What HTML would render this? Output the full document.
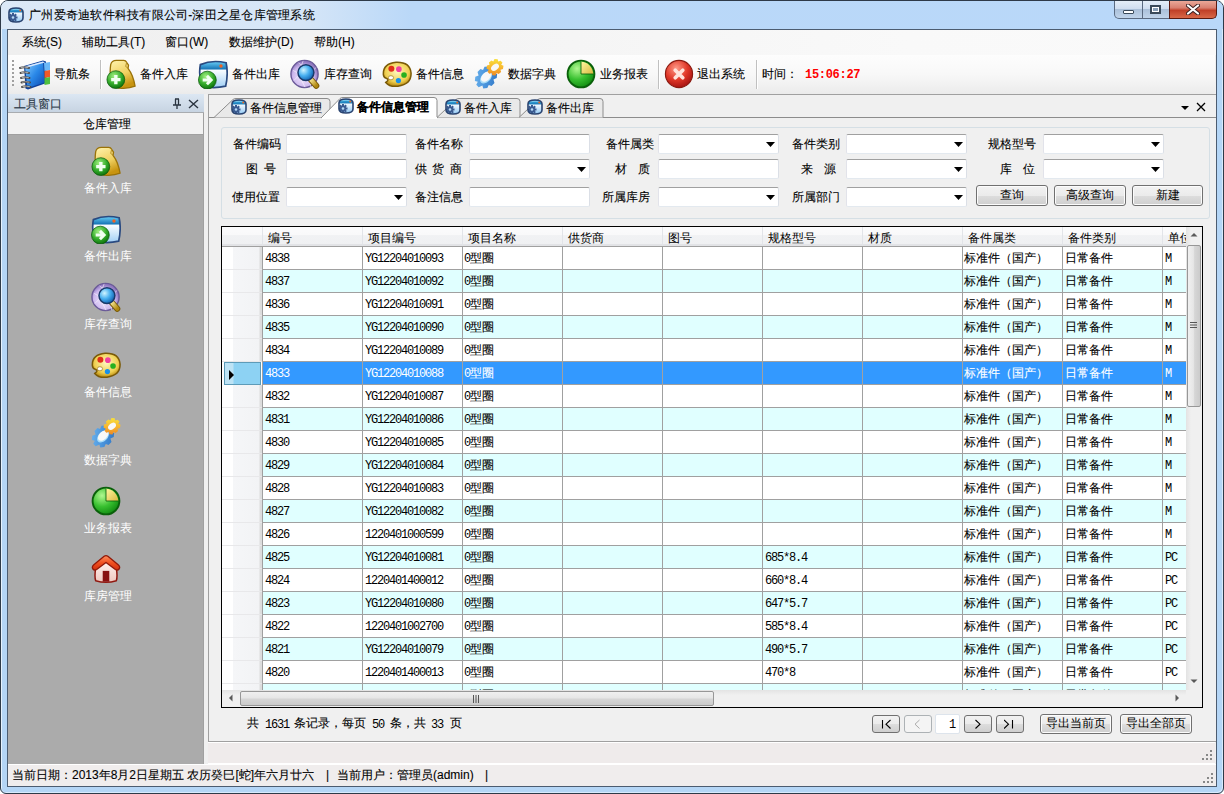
<!DOCTYPE html><html><head><meta charset="utf-8"><style>
*{margin:0;padding:0;box-sizing:border-box}
html,body{width:1224px;height:794px;overflow:hidden;background:#ffffff;font-family:'Liberation Sans', sans-serif;font-size:12px}
.a{position:absolute}
.t{position:absolute;white-space:pre;line-height:14px;-webkit-text-stroke:0.1px}
.m{-webkit-text-stroke:0}
</style></head><body>
<div class="a" style="left:0;top:0;width:1224px;height:794px;border:1px solid #2e3a48;border-radius:8px 8px 6px 6px;background:#b5d6f6;box-shadow:inset 1px 1px 0 #e6f2fd,inset -1px -1px 0 #d8eafc"></div>
<div class="a" style="left:1px;top:1px;width:1222px;height:28px;border-radius:7px 7px 0 0;background:linear-gradient(90deg,#dce9f7 0px,#d6e6f7 300px,#bad8f8 410px,#b9d8f9 100%)"></div>
<div class="a" style="left:2px;top:29px;width:5px;height:757px;background:#b4d5f5"></div>
<svg style="position:absolute;left:8px;top:7px" width="16" height="16" viewBox="0 0 32 32">
<defs><linearGradient id="gtb" x1="0" y1="0" x2="0" y2="1"><stop offset="0" stop-color="#40b8e8"/><stop offset="0.3" stop-color="#1a7ab8"/><stop offset="0.34" stop-color="#f4faff"/><stop offset="1" stop-color="#90c8f4"/></linearGradient>
<clipPath id="ctb"><path d="M2 10 Q2 2 16 2 Q30 2 30 10 L30 22 Q30 30 16 30 Q2 30 2 22 Z"/></clipPath></defs>
<path d="M2 10 Q2 2 16 2 Q30 2 30 10 L30 22 Q30 30 16 30 Q2 30 2 22 Z" fill="url(#gtb)"/>
<g clip-path="url(#ctb)"><g transform="translate(10 21)" fill="#3a5a90"><circle r="6"/><rect x="-2" y="-9" width="4" height="18"/><rect x="-9" y="-2" width="18" height="4"/><rect x="-2" y="-9" width="4" height="18" transform="rotate(45)"/><rect x="-2" y="-9" width="4" height="18" transform="rotate(-45)"/><circle r="2.6" fill="#b8dcf8"/></g></g>
<path d="M6 5.5 Q16 4 26 5.5" stroke="#c8f0ff" stroke-width="1.2" fill="none" opacity="0.8"/>
<circle cx="24.5" cy="7" r="2" fill="#f06820"/>
<path d="M2 10 Q2 2 16 2 Q30 2 30 10 L30 22 Q30 30 16 30 Q2 30 2 22 Z" fill="none" stroke="#2a4470" stroke-width="3.2"/>
</svg>
<div class="t" style="left:29px;top:8px;font-size:12px;color:#000;font-family:'Liberation Sans', sans-serif;font-weight:normal;letter-spacing:0.25px">广州爱奇迪软件科技有限公司-深田之星仓库管理系统</div>
<div class="a" style="left:1114px;top:1px;width:56px;height:18px;border:1px solid #5a6a80;border-top:none;border-radius:0 0 0 5px;background:linear-gradient(#e4eef8 0,#d0def0 45%,#a9bfd8 46%,#c0d4ea 100%)"></div>
<div class="a" style="left:1142px;top:1px;width:1px;height:18px;background:#5a6a80"></div>
<div class="a" style="left:1169px;top:1px;width:48px;height:18px;border:1px solid #5a1a10;border-top:none;border-radius:0 0 5px 0;background:linear-gradient(#eaa898 0,#d88070 40%,#c04028 55%,#d86848 100%)"></div>
<div class="a" style="left:1123px;top:10px;width:11px;height:4px;background:#fff;border:1px solid #3a4a5a;border-radius:1px"></div>
<div class="a" style="left:1150px;top:5px;width:11px;height:9px;border:2px solid #3a4a5a;background:#fff;box-shadow:inset 0 0 0 1px #fff"></div>
<div class="a" style="left:1153px;top:8px;width:5px;height:3px;background:#8aa0b8"></div>
<svg class="a" style="left:1186px;top:4px" width="14" height="11" viewBox="0 0 14 11"><path d="M2 1.5 L12 9.5 M12 1.5 L2 9.5" stroke="#3a2020" stroke-width="4" stroke-linecap="round"/><path d="M2 1.5 L12 9.5 M12 1.5 L2 9.5" stroke="#fff" stroke-width="2.2" stroke-linecap="round"/></svg>
<div class="a" style="left:7px;top:29px;width:1210px;height:758px;border:1px solid #4c5c70;background:#f0f0f0"></div>
<div class="a" style="left:8px;top:30px;width:1208px;height:25px;background:linear-gradient(90deg,#efefef 0,#f3f3f3 400px,#f9f9f9 900px,#fafafa 100%)"></div>
<div class="t" style="left:22px;top:35px;font-size:12px;color:#000;font-family:'Liberation Sans', sans-serif;font-weight:normal;">系统(S)</div>
<div class="t" style="left:82px;top:35px;font-size:12px;color:#000;font-family:'Liberation Sans', sans-serif;font-weight:normal;">辅助工具(T)</div>
<div class="t" style="left:165px;top:35px;font-size:12px;color:#000;font-family:'Liberation Sans', sans-serif;font-weight:normal;">窗口(W)</div>
<div class="t" style="left:229px;top:35px;font-size:12px;color:#000;font-family:'Liberation Sans', sans-serif;font-weight:normal;">数据维护(D)</div>
<div class="t" style="left:314px;top:35px;font-size:12px;color:#000;font-family:'Liberation Sans', sans-serif;font-weight:normal;">帮助(H)</div>
<div class="a" style="left:8px;top:55px;width:1207px;height:39px;border-radius:0 0 3px 0;background:linear-gradient(#fdfdfd 0,#f8f8f8 50%,#ebebeb 100%)"></div>
<div class="a" style="left:12px;top:60px;width:2px;height:2px;background:#a0a0a0"></div>
<div class="a" style="left:12px;top:64px;width:2px;height:2px;background:#a0a0a0"></div>
<div class="a" style="left:12px;top:68px;width:2px;height:2px;background:#a0a0a0"></div>
<div class="a" style="left:12px;top:72px;width:2px;height:2px;background:#a0a0a0"></div>
<div class="a" style="left:12px;top:76px;width:2px;height:2px;background:#a0a0a0"></div>
<div class="a" style="left:12px;top:80px;width:2px;height:2px;background:#a0a0a0"></div>
<div class="a" style="left:12px;top:84px;width:2px;height:2px;background:#a0a0a0"></div>
<svg style="position:absolute;left:19px;top:58px" width="32" height="32" viewBox="0 0 32 32">
<defs><linearGradient id="gnav" x1="0" y1="0" x2="1" y2="1"><stop offset="0" stop-color="#8cd0ff"/><stop offset="0.5" stop-color="#2a88e8"/><stop offset="1" stop-color="#0a48b0"/></linearGradient></defs>
<path d="M5 8 L24 2.5 L27 3.5 L27.5 25 L9 31.5 L6.5 30.5 Z" fill="#10409a"/>
<path d="M6 8.5 L24 3.5 L25.5 24.5 L8.5 30 Z" fill="url(#gnav)"/>
<path d="M6 8.5 L24 3.5 L26 4.5 L8 9.5 Z" fill="#d8e8ff"/>
<path d="M25 5 L31 4 L31 12 L25.5 13 Z" fill="#6ab8f8"/>
<path d="M25.5 13 L31 12 L31 19 L25.5 20 Z" fill="#f05a28"/>
<path d="M25.5 20 L31 19 L31 26 L25.5 27 Z" fill="#50c040"/>
<g stroke="#4a4a4a" stroke-width="2" stroke-linecap="round"><path d="M1 10 Q5 8.5 10 10"/><path d="M1.5 15 Q5.5 13.5 10 15"/><path d="M2 20 Q6 18.5 10.5 20"/><path d="M2.5 24.5 Q6.5 23 11 24.5"/><path d="M3 29 Q7 27.5 11.5 29"/></g>
<g stroke="#c8c8c8" stroke-width="0.8" stroke-linecap="round"><path d="M2 9.6 Q5 8.6 9 9.6"/><path d="M2.5 14.6 Q5.5 13.6 9 14.6"/><path d="M3 19.6 Q6 18.6 9.5 19.6"/><path d="M3.5 24.1 Q6.5 23.1 10 24.1"/><path d="M4 28.6 Q7 27.6 10.5 28.6"/></g>
</svg>
<div class="t" style="left:54px;top:67px;font-size:12px;color:#000;font-family:'Liberation Sans', sans-serif;font-weight:normal;">导航条</div>
<div class="a" style="left:100px;top:60px;width:1px;height:29px;background:#c0c0c0;box-shadow:1px 0 0 #fff"></div>
<svg style="position:absolute;left:106px;top:59px" width="30" height="30" viewBox="0 0 32 32">
<defs><linearGradient id="gin" x1="0" y1="0" x2="0.4" y2="1"><stop offset="0" stop-color="#fff4b0"/><stop offset="0.6" stop-color="#f0d060"/><stop offset="1" stop-color="#c89410"/></linearGradient>
<radialGradient id="ggr" cx="0.4" cy="0.3" r="0.75"><stop offset="0" stop-color="#a0f080"/><stop offset="0.6" stop-color="#30a828"/><stop offset="1" stop-color="#0a6a0a"/></radialGradient></defs>
<path d="M5 6 Q6 1.5 11 1.5 L19 1.5 Q21 1.5 22 3.5 L24 6.5 L23.5 10 Q29 17 31 29 Q24 32 14 31 L6 29 Q3.5 16 5 6 Z" fill="url(#gin)" stroke="#9a7208" stroke-width="1.4"/>
<path d="M22 3.5 L21 8 L24 10" fill="none" stroke="#b08a20" stroke-width="1"/>
<circle cx="10.5" cy="22" r="9.5" fill="url(#ggr)" stroke="#0a5a0a" stroke-width="0.8"/>
<path d="M5.5 22 H15.5 M10.5 17 V27" stroke="#f0fff0" stroke-width="3.6"/>
</svg>
<div class="t" style="left:140px;top:67px;font-size:12px;color:#000;font-family:'Liberation Sans', sans-serif;font-weight:normal;">备件入库</div>
<svg style="position:absolute;left:198px;top:59px" width="30" height="30" viewBox="0 0 32 32">
<defs><linearGradient id="gout" x1="0" y1="0" x2="0" y2="1"><stop offset="0" stop-color="#6ad0f8"/><stop offset="0.28" stop-color="#1a78b8"/><stop offset="0.34" stop-color="#f8fcff"/><stop offset="1" stop-color="#a0cff5"/></linearGradient>
<radialGradient id="ggr2" cx="0.4" cy="0.3" r="0.75"><stop offset="0" stop-color="#a0f080"/><stop offset="0.6" stop-color="#30a828"/><stop offset="1" stop-color="#0a6a0a"/></radialGradient></defs>
<path d="M2.5 6 Q15 0.5 30 4 Q32.5 16 29.5 29 Q17 32 4 29 Q0.5 17 2.5 6 Z" fill="url(#gout)" stroke="#2a4a80" stroke-width="1.8"/>
<circle cx="24.5" cy="7.5" r="1.8" fill="#f06020"/>
<circle cx="10" cy="22.5" r="9.5" fill="url(#ggr2)" stroke="#0a5a0a" stroke-width="0.8"/>
<path d="M5 22.5 H12.5 M9.5 18 L14 22.5 L9.5 27" stroke="#f0fff0" stroke-width="3.2" fill="none" stroke-linejoin="miter"/>
</svg>
<div class="t" style="left:232px;top:67px;font-size:12px;color:#000;font-family:'Liberation Sans', sans-serif;font-weight:normal;">备件出库</div>
<svg style="position:absolute;left:290px;top:59px" width="30" height="30" viewBox="0 0 32 32">
<defs><radialGradient id="gq" cx="0.45" cy="0.6" r="0.55"><stop offset="0" stop-color="#f4ecff"/><stop offset="0.7" stop-color="#cdb8ee"/><stop offset="1" stop-color="#9078c0"/></radialGradient>
<radialGradient id="gqm" cx="0.35" cy="0.35" r="0.7"><stop offset="0" stop-color="#d0f4ff"/><stop offset="0.5" stop-color="#48b0f0"/><stop offset="1" stop-color="#1060b0"/></radialGradient>
<linearGradient id="gqh" x1="0" y1="0" x2="1" y2="1"><stop offset="0" stop-color="#fff0a0"/><stop offset="1" stop-color="#b08810"/></linearGradient></defs>
<circle cx="15.5" cy="16" r="14.5" fill="url(#gq)" stroke="#6a5a98" stroke-width="1.5"/>
<path d="M3 12 Q16 22 28 9 M4 23 Q15 8 27 24 M14 2 Q7 16 16 30 M9 4 Q22 12 22 30" stroke="#ffffff" stroke-opacity="0.7" stroke-width="0.8" fill="none"/>
<path d="M21.5 21 L28 28.5" stroke="#7a5a08" stroke-width="6.5" stroke-linecap="round"/>
<path d="M21.5 21 L28 28.5" stroke="url(#gqh)" stroke-width="4.5" stroke-linecap="round"/>
<circle cx="17" cy="14.5" r="8.5" fill="url(#gqm)" stroke="#1a3a6a" stroke-width="1.6"/>
</svg>
<div class="t" style="left:324px;top:67px;font-size:12px;color:#000;font-family:'Liberation Sans', sans-serif;font-weight:normal;">库存查询</div>
<svg style="position:absolute;left:382px;top:59px" width="30" height="30" viewBox="0 0 32 32">
<defs><radialGradient id="gp" cx="0.5" cy="0.4" r="0.6"><stop offset="0" stop-color="#fff8c0"/><stop offset="0.7" stop-color="#f0d050"/><stop offset="1" stop-color="#b88a10"/></radialGradient></defs>
<path d="M1.5 17 Q0.5 5 15 3.5 Q30 3 31 15 Q31.5 27 17 29 Q8 30 4 25 Q8.5 22 4.5 20.5 Q2 20 1.5 17 Z" fill="url(#gp)" stroke="#7a5a08" stroke-width="1.6"/>
<ellipse cx="9.5" cy="20" rx="2.8" ry="2.2" fill="#ffffff" stroke="#a08030" stroke-width="0.8"/>
<circle cx="10" cy="10.5" r="3.2" fill="#e03018"/><circle cx="18" cy="10.8" r="3" fill="#f040a0"/>
<circle cx="23.5" cy="17" r="3" fill="#28b020"/><circle cx="17.5" cy="23" r="2.8" fill="#1890e8"/>
</svg>
<div class="t" style="left:416px;top:67px;font-size:12px;color:#000;font-family:'Liberation Sans', sans-serif;font-weight:normal;">备件信息</div>
<svg style="position:absolute;left:474px;top:59px" width="30" height="30" viewBox="0 0 32 32">
<defs><linearGradient id="gd1" x1="0" y1="0" x2="1" y2="1"><stop offset="0" stop-color="#70b8f0"/><stop offset="0.5" stop-color="#4a94dc"/><stop offset="1" stop-color="#2a70c0"/></linearGradient>
<linearGradient id="gd2" x1="1" y1="0" x2="0" y2="1"><stop offset="0" stop-color="#f8f040"/><stop offset="0.5" stop-color="#f8b830"/><stop offset="1" stop-color="#e87820"/></linearGradient></defs>
<g transform="translate(12.8 19.7) rotate(-45) scale(1.12 0.92)"><path d="M-2 -11.5 L2 -11.5 L3 -8.5 L6.2 -10 L9.2 -6.8 L7.8 -3.6 L11.5 -2 L11.5 2 L8.4 3.2 L9.8 6.3 L6.8 9.3 L3.6 7.8 L2 11.5 L-2 11.5 L-3.2 8.4 L-6.3 9.8 L-9.3 6.8 L-7.8 3.6 L-11.5 2 L-11.5 -2 L-8.4 -3.2 L-9.8 -6.3 L-6.8 -9.3 L-3.6 -7.8 Z" fill="url(#gd1)"/>
<ellipse cx="0" cy="0" rx="6.8" ry="5.2" fill="#a8dcf8"/><ellipse cx="0.8" cy="-0.6" rx="6" ry="4.6" fill="#f8f8f8"/></g>
<g transform="translate(22.4 8.8) rotate(-40) scale(1.08 0.95)"><path d="M-1.6 -8.5 L1.6 -8.5 L2.4 -6.2 L4.8 -7.4 L7.2 -5 L6 -2.6 L8.5 -1.6 L8.5 1.6 L6.2 2.4 L7.4 4.8 L5 7.2 L2.6 6 L1.6 8.5 L-1.6 8.5 L-2.4 6.2 L-4.8 7.4 L-7.2 5 L-6 2.6 L-8.5 1.6 L-8.5 -1.6 L-6.2 -2.4 L-7.4 -4.8 L-5 -7.2 L-2.6 -6 Z" fill="url(#gd2)"/>
<ellipse cx="0" cy="0" rx="4.4" ry="3.3" fill="#f8f8f8"/></g>
</svg>
<div class="t" style="left:508px;top:67px;font-size:12px;color:#000;font-family:'Liberation Sans', sans-serif;font-weight:normal;">数据字典</div>
<svg style="position:absolute;left:566px;top:59px" width="30" height="30" viewBox="0 0 32 32">
<defs><radialGradient id="gr" cx="0.35" cy="0.3" r="0.75"><stop offset="0" stop-color="#b0f890"/><stop offset="0.55" stop-color="#38c030"/><stop offset="1" stop-color="#108a10"/></radialGradient>
<linearGradient id="gry" x1="0" y1="0" x2="1" y2="1"><stop offset="0" stop-color="#fff8a0"/><stop offset="1" stop-color="#d8b840"/></linearGradient></defs>
<circle cx="16" cy="16" r="14.3" fill="url(#gr)" stroke="#0a600a" stroke-width="2"/>
<path d="M16 16 L16 3 A13 13 0 0 1 29 16 Z" fill="url(#gry)"/>
<path d="M16 3 V16 H29" stroke="#0a600a" stroke-width="0.9" fill="none"/>
</svg>
<div class="t" style="left:600px;top:67px;font-size:12px;color:#000;font-family:'Liberation Sans', sans-serif;font-weight:normal;">业务报表</div>
<div class="a" style="left:658px;top:60px;width:1px;height:29px;background:#c0c0c0;box-shadow:1px 0 0 #fff"></div>
<svg style="position:absolute;left:664px;top:59px" width="30" height="30" viewBox="0 0 32 32">
<defs><radialGradient id="ge" cx="0.4" cy="0.3" r="0.75"><stop offset="0" stop-color="#ff9a88"/><stop offset="0.55" stop-color="#e03828"/><stop offset="1" stop-color="#a01010"/></radialGradient></defs>
<circle cx="16" cy="16" r="14.5" fill="url(#ge)" stroke="#8a1a10" stroke-width="1.2"/>
<path d="M12 12 L20 20 M20 12 L12 20" stroke="#ffe4dc" stroke-width="4" stroke-linecap="round"/>
</svg>
<div class="t" style="left:697px;top:67px;font-size:12px;color:#000;font-family:'Liberation Sans', sans-serif;font-weight:normal;">退出系统</div>
<div class="a" style="left:756px;top:60px;width:1px;height:29px;background:#c0c0c0;box-shadow:1px 0 0 #fff"></div>
<div class="t" style="left:762px;top:67px;font-size:12px;color:#000;font-family:'Liberation Sans', sans-serif;font-weight:normal;">时间：</div>
<div class="t" style="left:805px;top:68px;font-size:12px;color:#ff0000;font-family:'Liberation Mono', monospace;font-weight:bold;letter-spacing:-0.3px;-webkit-text-stroke:0">15:06:27</div>
<div class="a" style="left:8px;top:94px;width:196px;height:19px;background:linear-gradient(#dce7f3,#c7d4e2);border-bottom:1px solid #a8acb0"></div>
<div class="t" style="left:14px;top:97px;font-size:12px;color:#2c3a48;font-family:'Liberation Sans', sans-serif;font-weight:normal;">工具窗口</div>
<svg class="a" style="left:172px;top:98px" width="10" height="12" viewBox="0 0 10 12"><path d="M3 1 H7 M3.5 1 V7 M6.5 1 V7 M1 7 H9 M5 7 V11" stroke="#2a3440" stroke-width="1.3" fill="none"/></svg>
<svg class="a" style="left:188px;top:99px" width="11" height="10" viewBox="0 0 11 10"><path d="M1 1 L10 9 M10 1 L1 9" stroke="#2a3440" stroke-width="1.4"/></svg>
<div class="a" style="left:8px;top:113px;width:196px;height:22px;background:#f2f2f2;border-bottom:1px solid #a0a0a0;border-right:1px solid #a0a0a0"></div>
<div class="t" style="left:83px;top:117px;font-size:12px;color:#000;font-family:'Liberation Sans', sans-serif;font-weight:normal;">仓库管理</div>
<div class="a" style="left:8px;top:135px;width:196px;height:629px;background:#ababab;border-right:1px solid #a0a0a0"></div>
<svg style="position:absolute;left:91px;top:146px" width="30" height="30" viewBox="0 0 32 32">
<defs><linearGradient id="gin" x1="0" y1="0" x2="0.4" y2="1"><stop offset="0" stop-color="#fff4b0"/><stop offset="0.6" stop-color="#f0d060"/><stop offset="1" stop-color="#c89410"/></linearGradient>
<radialGradient id="ggr" cx="0.4" cy="0.3" r="0.75"><stop offset="0" stop-color="#a0f080"/><stop offset="0.6" stop-color="#30a828"/><stop offset="1" stop-color="#0a6a0a"/></radialGradient></defs>
<path d="M5 6 Q6 1.5 11 1.5 L19 1.5 Q21 1.5 22 3.5 L24 6.5 L23.5 10 Q29 17 31 29 Q24 32 14 31 L6 29 Q3.5 16 5 6 Z" fill="url(#gin)" stroke="#9a7208" stroke-width="1.4"/>
<path d="M22 3.5 L21 8 L24 10" fill="none" stroke="#b08a20" stroke-width="1"/>
<circle cx="10.5" cy="22" r="9.5" fill="url(#ggr)" stroke="#0a5a0a" stroke-width="0.8"/>
<path d="M5.5 22 H15.5 M10.5 17 V27" stroke="#f0fff0" stroke-width="3.6"/>
</svg>
<div class="t" style="left:84px;top:181px;font-size:12px;color:#ffffff;font-family:'Liberation Sans', sans-serif;font-weight:normal;-webkit-text-stroke:0">备件入库</div>
<svg style="position:absolute;left:91px;top:214px" width="30" height="30" viewBox="0 0 32 32">
<defs><linearGradient id="gout" x1="0" y1="0" x2="0" y2="1"><stop offset="0" stop-color="#6ad0f8"/><stop offset="0.28" stop-color="#1a78b8"/><stop offset="0.34" stop-color="#f8fcff"/><stop offset="1" stop-color="#a0cff5"/></linearGradient>
<radialGradient id="ggr2" cx="0.4" cy="0.3" r="0.75"><stop offset="0" stop-color="#a0f080"/><stop offset="0.6" stop-color="#30a828"/><stop offset="1" stop-color="#0a6a0a"/></radialGradient></defs>
<path d="M2.5 6 Q15 0.5 30 4 Q32.5 16 29.5 29 Q17 32 4 29 Q0.5 17 2.5 6 Z" fill="url(#gout)" stroke="#2a4a80" stroke-width="1.8"/>
<circle cx="24.5" cy="7.5" r="1.8" fill="#f06020"/>
<circle cx="10" cy="22.5" r="9.5" fill="url(#ggr2)" stroke="#0a5a0a" stroke-width="0.8"/>
<path d="M5 22.5 H12.5 M9.5 18 L14 22.5 L9.5 27" stroke="#f0fff0" stroke-width="3.2" fill="none" stroke-linejoin="miter"/>
</svg>
<div class="t" style="left:84px;top:249px;font-size:12px;color:#ffffff;font-family:'Liberation Sans', sans-serif;font-weight:normal;-webkit-text-stroke:0">备件出库</div>
<svg style="position:absolute;left:91px;top:282px" width="30" height="30" viewBox="0 0 32 32">
<defs><radialGradient id="gq" cx="0.45" cy="0.6" r="0.55"><stop offset="0" stop-color="#f4ecff"/><stop offset="0.7" stop-color="#cdb8ee"/><stop offset="1" stop-color="#9078c0"/></radialGradient>
<radialGradient id="gqm" cx="0.35" cy="0.35" r="0.7"><stop offset="0" stop-color="#d0f4ff"/><stop offset="0.5" stop-color="#48b0f0"/><stop offset="1" stop-color="#1060b0"/></radialGradient>
<linearGradient id="gqh" x1="0" y1="0" x2="1" y2="1"><stop offset="0" stop-color="#fff0a0"/><stop offset="1" stop-color="#b08810"/></linearGradient></defs>
<circle cx="15.5" cy="16" r="14.5" fill="url(#gq)" stroke="#6a5a98" stroke-width="1.5"/>
<path d="M3 12 Q16 22 28 9 M4 23 Q15 8 27 24 M14 2 Q7 16 16 30 M9 4 Q22 12 22 30" stroke="#ffffff" stroke-opacity="0.7" stroke-width="0.8" fill="none"/>
<path d="M21.5 21 L28 28.5" stroke="#7a5a08" stroke-width="6.5" stroke-linecap="round"/>
<path d="M21.5 21 L28 28.5" stroke="url(#gqh)" stroke-width="4.5" stroke-linecap="round"/>
<circle cx="17" cy="14.5" r="8.5" fill="url(#gqm)" stroke="#1a3a6a" stroke-width="1.6"/>
</svg>
<div class="t" style="left:84px;top:317px;font-size:12px;color:#ffffff;font-family:'Liberation Sans', sans-serif;font-weight:normal;-webkit-text-stroke:0">库存查询</div>
<svg style="position:absolute;left:91px;top:350px" width="30" height="30" viewBox="0 0 32 32">
<defs><radialGradient id="gp" cx="0.5" cy="0.4" r="0.6"><stop offset="0" stop-color="#fff8c0"/><stop offset="0.7" stop-color="#f0d050"/><stop offset="1" stop-color="#b88a10"/></radialGradient></defs>
<path d="M1.5 17 Q0.5 5 15 3.5 Q30 3 31 15 Q31.5 27 17 29 Q8 30 4 25 Q8.5 22 4.5 20.5 Q2 20 1.5 17 Z" fill="url(#gp)" stroke="#7a5a08" stroke-width="1.6"/>
<ellipse cx="9.5" cy="20" rx="2.8" ry="2.2" fill="#ffffff" stroke="#a08030" stroke-width="0.8"/>
<circle cx="10" cy="10.5" r="3.2" fill="#e03018"/><circle cx="18" cy="10.8" r="3" fill="#f040a0"/>
<circle cx="23.5" cy="17" r="3" fill="#28b020"/><circle cx="17.5" cy="23" r="2.8" fill="#1890e8"/>
</svg>
<div class="t" style="left:84px;top:385px;font-size:12px;color:#ffffff;font-family:'Liberation Sans', sans-serif;font-weight:normal;-webkit-text-stroke:0">备件信息</div>
<svg style="position:absolute;left:91px;top:418px" width="30" height="30" viewBox="0 0 32 32">
<defs><linearGradient id="gd1" x1="0" y1="0" x2="1" y2="1"><stop offset="0" stop-color="#70b8f0"/><stop offset="0.5" stop-color="#4a94dc"/><stop offset="1" stop-color="#2a70c0"/></linearGradient>
<linearGradient id="gd2" x1="1" y1="0" x2="0" y2="1"><stop offset="0" stop-color="#f8f040"/><stop offset="0.5" stop-color="#f8b830"/><stop offset="1" stop-color="#e87820"/></linearGradient></defs>
<g transform="translate(12.8 19.7) rotate(-45) scale(1.12 0.92)"><path d="M-2 -11.5 L2 -11.5 L3 -8.5 L6.2 -10 L9.2 -6.8 L7.8 -3.6 L11.5 -2 L11.5 2 L8.4 3.2 L9.8 6.3 L6.8 9.3 L3.6 7.8 L2 11.5 L-2 11.5 L-3.2 8.4 L-6.3 9.8 L-9.3 6.8 L-7.8 3.6 L-11.5 2 L-11.5 -2 L-8.4 -3.2 L-9.8 -6.3 L-6.8 -9.3 L-3.6 -7.8 Z" fill="url(#gd1)"/>
<ellipse cx="0" cy="0" rx="6.8" ry="5.2" fill="#a8dcf8"/><ellipse cx="0.8" cy="-0.6" rx="6" ry="4.6" fill="#f8f8f8"/></g>
<g transform="translate(22.4 8.8) rotate(-40) scale(1.08 0.95)"><path d="M-1.6 -8.5 L1.6 -8.5 L2.4 -6.2 L4.8 -7.4 L7.2 -5 L6 -2.6 L8.5 -1.6 L8.5 1.6 L6.2 2.4 L7.4 4.8 L5 7.2 L2.6 6 L1.6 8.5 L-1.6 8.5 L-2.4 6.2 L-4.8 7.4 L-7.2 5 L-6 2.6 L-8.5 1.6 L-8.5 -1.6 L-6.2 -2.4 L-7.4 -4.8 L-5 -7.2 L-2.6 -6 Z" fill="url(#gd2)"/>
<ellipse cx="0" cy="0" rx="4.4" ry="3.3" fill="#f8f8f8"/></g>
</svg>
<div class="t" style="left:84px;top:453px;font-size:12px;color:#ffffff;font-family:'Liberation Sans', sans-serif;font-weight:normal;-webkit-text-stroke:0">数据字典</div>
<svg style="position:absolute;left:91px;top:486px" width="30" height="30" viewBox="0 0 32 32">
<defs><radialGradient id="gr" cx="0.35" cy="0.3" r="0.75"><stop offset="0" stop-color="#b0f890"/><stop offset="0.55" stop-color="#38c030"/><stop offset="1" stop-color="#108a10"/></radialGradient>
<linearGradient id="gry" x1="0" y1="0" x2="1" y2="1"><stop offset="0" stop-color="#fff8a0"/><stop offset="1" stop-color="#d8b840"/></linearGradient></defs>
<circle cx="16" cy="16" r="14.3" fill="url(#gr)" stroke="#0a600a" stroke-width="2"/>
<path d="M16 16 L16 3 A13 13 0 0 1 29 16 Z" fill="url(#gry)"/>
<path d="M16 3 V16 H29" stroke="#0a600a" stroke-width="0.9" fill="none"/>
</svg>
<div class="t" style="left:84px;top:521px;font-size:12px;color:#ffffff;font-family:'Liberation Sans', sans-serif;font-weight:normal;-webkit-text-stroke:0">业务报表</div>
<svg style="position:absolute;left:91px;top:554px" width="30" height="30" viewBox="0 0 32 32">
<defs><linearGradient id="gh" x1="0" y1="0" x2="0" y2="1"><stop offset="0" stop-color="#ff9060"/><stop offset="0.5" stop-color="#f05020"/><stop offset="1" stop-color="#d03010"/></linearGradient>
<linearGradient id="gh2" x1="0" y1="0" x2="0" y2="1"><stop offset="0" stop-color="#fff4f0"/><stop offset="1" stop-color="#f0c8c0"/></linearGradient></defs>
<path d="M5 15 L16 7 L27 15 Q28.5 24 27 28.5 Q16 32 5 28.5 Q3.5 24 5 15 Z" fill="url(#gh2)" stroke="#901810" stroke-width="1.6"/>
<rect x="12.5" y="18" width="7" height="11.5" fill="#881010"/>
<path d="M2 16 Q0.5 13.5 3 11.5 L14 2.5 Q16 1 18 2.5 L29 11.5 Q31.5 13.5 30 16 Q28.5 18 26 16.5 L16 9 L6 16.5 Q3.5 18 2 16 Z" fill="url(#gh)" stroke="#901808" stroke-width="1.4" stroke-linejoin="round"/>
</svg>
<div class="t" style="left:84px;top:589px;font-size:12px;color:#ffffff;font-family:'Liberation Sans', sans-serif;font-weight:normal;-webkit-text-stroke:0">库房管理</div>
<div class="a" style="left:208px;top:94px;width:1008px;height:648px;border-left:1px solid #a0a0a0;border-top:1px solid #a0a0a0;border-bottom:1px solid #a0a0a0;background:#f0f0f0"></div>
<svg class="a" style="left:208px;top:94px" width="1008" height="25" viewBox="0 0 1008 25"><line x1="1" y1="23.5" x2="1008" y2="23.5" stroke="#8c8c8c"/><path d="M6 23.5 L25 5.5 Q26 4.5 28 4.5 L119 4.5 Q122 4.5 122 7.5 L122 23.5" fill="#e9e9e9" stroke="#8c8c8c"/><path d="M229 23.5 L248 5.5 Q249 4.5 251 4.5 L309 4.5 Q312 4.5 312 7.5 L312 23.5" fill="#e9e9e9" stroke="#8c8c8c"/><path d="M311 23.5 L330 5.5 Q331 4.5 333 4.5 L392 4.5 Q395 4.5 395 7.5 L395 23.5" fill="#e9e9e9" stroke="#8c8c8c"/><path d="M113 24 L132 4.5 Q133 3.5 135 3.5 L226 3.5 Q229 3.5 229 6.5 L229 24" fill="#ffffff" stroke="#8c8c8c"/><rect x="114" y="23" width="115" height="2" fill="#ffffff"/></svg>
<svg style="position:absolute;left:231px;top:99px" width="16" height="16" viewBox="0 0 32 32">
<defs><linearGradient id="gtb" x1="0" y1="0" x2="0" y2="1"><stop offset="0" stop-color="#40b8e8"/><stop offset="0.3" stop-color="#1a7ab8"/><stop offset="0.34" stop-color="#f4faff"/><stop offset="1" stop-color="#90c8f4"/></linearGradient>
<clipPath id="ctb"><path d="M2 10 Q2 2 16 2 Q30 2 30 10 L30 22 Q30 30 16 30 Q2 30 2 22 Z"/></clipPath></defs>
<path d="M2 10 Q2 2 16 2 Q30 2 30 10 L30 22 Q30 30 16 30 Q2 30 2 22 Z" fill="url(#gtb)"/>
<g clip-path="url(#ctb)"><g transform="translate(10 21)" fill="#3a5a90"><circle r="6"/><rect x="-2" y="-9" width="4" height="18"/><rect x="-9" y="-2" width="18" height="4"/><rect x="-2" y="-9" width="4" height="18" transform="rotate(45)"/><rect x="-2" y="-9" width="4" height="18" transform="rotate(-45)"/><circle r="2.6" fill="#b8dcf8"/></g></g>
<path d="M6 5.5 Q16 4 26 5.5" stroke="#c8f0ff" stroke-width="1.2" fill="none" opacity="0.8"/>
<circle cx="24.5" cy="7" r="2" fill="#f06820"/>
<path d="M2 10 Q2 2 16 2 Q30 2 30 10 L30 22 Q30 30 16 30 Q2 30 2 22 Z" fill="none" stroke="#2a4470" stroke-width="3.2"/>
</svg>
<div class="t" style="left:250px;top:101px;font-size:12px;color:#000;font-family:'Liberation Sans', sans-serif;font-weight:normal;">备件信息管理</div>
<svg style="position:absolute;left:338px;top:98px" width="16" height="16" viewBox="0 0 32 32">
<defs><linearGradient id="gtb" x1="0" y1="0" x2="0" y2="1"><stop offset="0" stop-color="#40b8e8"/><stop offset="0.3" stop-color="#1a7ab8"/><stop offset="0.34" stop-color="#f4faff"/><stop offset="1" stop-color="#90c8f4"/></linearGradient>
<clipPath id="ctb"><path d="M2 10 Q2 2 16 2 Q30 2 30 10 L30 22 Q30 30 16 30 Q2 30 2 22 Z"/></clipPath></defs>
<path d="M2 10 Q2 2 16 2 Q30 2 30 10 L30 22 Q30 30 16 30 Q2 30 2 22 Z" fill="url(#gtb)"/>
<g clip-path="url(#ctb)"><g transform="translate(10 21)" fill="#3a5a90"><circle r="6"/><rect x="-2" y="-9" width="4" height="18"/><rect x="-9" y="-2" width="18" height="4"/><rect x="-2" y="-9" width="4" height="18" transform="rotate(45)"/><rect x="-2" y="-9" width="4" height="18" transform="rotate(-45)"/><circle r="2.6" fill="#b8dcf8"/></g></g>
<path d="M6 5.5 Q16 4 26 5.5" stroke="#c8f0ff" stroke-width="1.2" fill="none" opacity="0.8"/>
<circle cx="24.5" cy="7" r="2" fill="#f06820"/>
<path d="M2 10 Q2 2 16 2 Q30 2 30 10 L30 22 Q30 30 16 30 Q2 30 2 22 Z" fill="none" stroke="#2a4470" stroke-width="3.2"/>
</svg>
<div class="t" style="left:357px;top:100px;font-size:12px;color:#000;font-family:'Liberation Sans', sans-serif;font-weight:bold;">备件信息管理</div>
<svg style="position:absolute;left:445px;top:99px" width="16" height="16" viewBox="0 0 32 32">
<defs><linearGradient id="gtb" x1="0" y1="0" x2="0" y2="1"><stop offset="0" stop-color="#40b8e8"/><stop offset="0.3" stop-color="#1a7ab8"/><stop offset="0.34" stop-color="#f4faff"/><stop offset="1" stop-color="#90c8f4"/></linearGradient>
<clipPath id="ctb"><path d="M2 10 Q2 2 16 2 Q30 2 30 10 L30 22 Q30 30 16 30 Q2 30 2 22 Z"/></clipPath></defs>
<path d="M2 10 Q2 2 16 2 Q30 2 30 10 L30 22 Q30 30 16 30 Q2 30 2 22 Z" fill="url(#gtb)"/>
<g clip-path="url(#ctb)"><g transform="translate(10 21)" fill="#3a5a90"><circle r="6"/><rect x="-2" y="-9" width="4" height="18"/><rect x="-9" y="-2" width="18" height="4"/><rect x="-2" y="-9" width="4" height="18" transform="rotate(45)"/><rect x="-2" y="-9" width="4" height="18" transform="rotate(-45)"/><circle r="2.6" fill="#b8dcf8"/></g></g>
<path d="M6 5.5 Q16 4 26 5.5" stroke="#c8f0ff" stroke-width="1.2" fill="none" opacity="0.8"/>
<circle cx="24.5" cy="7" r="2" fill="#f06820"/>
<path d="M2 10 Q2 2 16 2 Q30 2 30 10 L30 22 Q30 30 16 30 Q2 30 2 22 Z" fill="none" stroke="#2a4470" stroke-width="3.2"/>
</svg>
<div class="t" style="left:464px;top:101px;font-size:12px;color:#000;font-family:'Liberation Sans', sans-serif;font-weight:normal;">备件入库</div>
<svg style="position:absolute;left:527px;top:99px" width="16" height="16" viewBox="0 0 32 32">
<defs><linearGradient id="gtb" x1="0" y1="0" x2="0" y2="1"><stop offset="0" stop-color="#40b8e8"/><stop offset="0.3" stop-color="#1a7ab8"/><stop offset="0.34" stop-color="#f4faff"/><stop offset="1" stop-color="#90c8f4"/></linearGradient>
<clipPath id="ctb"><path d="M2 10 Q2 2 16 2 Q30 2 30 10 L30 22 Q30 30 16 30 Q2 30 2 22 Z"/></clipPath></defs>
<path d="M2 10 Q2 2 16 2 Q30 2 30 10 L30 22 Q30 30 16 30 Q2 30 2 22 Z" fill="url(#gtb)"/>
<g clip-path="url(#ctb)"><g transform="translate(10 21)" fill="#3a5a90"><circle r="6"/><rect x="-2" y="-9" width="4" height="18"/><rect x="-9" y="-2" width="18" height="4"/><rect x="-2" y="-9" width="4" height="18" transform="rotate(45)"/><rect x="-2" y="-9" width="4" height="18" transform="rotate(-45)"/><circle r="2.6" fill="#b8dcf8"/></g></g>
<path d="M6 5.5 Q16 4 26 5.5" stroke="#c8f0ff" stroke-width="1.2" fill="none" opacity="0.8"/>
<circle cx="24.5" cy="7" r="2" fill="#f06820"/>
<path d="M2 10 Q2 2 16 2 Q30 2 30 10 L30 22 Q30 30 16 30 Q2 30 2 22 Z" fill="none" stroke="#2a4470" stroke-width="3.2"/>
</svg>
<div class="t" style="left:546px;top:101px;font-size:12px;color:#000;font-family:'Liberation Sans', sans-serif;font-weight:normal;">备件出库</div>
<svg class="a" style="left:1180px;top:105px" width="10" height="6" viewBox="0 0 10 6"><path d="M1 1 L9 1 L5 5 Z" fill="#000"/></svg>
<svg class="a" style="left:1196px;top:102px" width="10" height="10" viewBox="0 0 10 10"><path d="M1 1 L9 9 M9 1 L1 9" stroke="#000" stroke-width="1.3"/></svg>
<div class="a" style="left:221px;top:127px;width:989px;height:92px;border:1px solid #d5dfe5;border-radius:3px;background:#f0f0f0"></div>
<div class="t" style="left:233px;top:137px;font-size:12px;color:#000;font-family:'Liberation Sans', sans-serif;font-weight:normal;">备件编码</div>
<div class="a" style="left:286px;top:134px;width:121px;height:20px;border:1px solid #abadb3;border-top-color:#a0a0a0;border-left-color:#e2e3ea;border-right-color:#dbdfe6;border-bottom-color:#e3e9ef;border-radius:2px;background:#fff"></div>
<div class="t" style="left:415px;top:137px;font-size:12px;color:#000;font-family:'Liberation Sans', sans-serif;font-weight:normal;">备件名称</div>
<div class="a" style="left:469px;top:134px;width:121px;height:20px;border:1px solid #abadb3;border-top-color:#a0a0a0;border-left-color:#e2e3ea;border-right-color:#dbdfe6;border-bottom-color:#e3e9ef;border-radius:2px;background:#fff"></div>
<div class="t" style="left:606px;top:137px;font-size:12px;color:#000;font-family:'Liberation Sans', sans-serif;font-weight:normal;">备件属类</div>
<div class="a" style="left:658px;top:134px;width:121px;height:20px;border:1px solid #abadb3;border-top-color:#a0a0a0;border-left-color:#e2e3ea;border-right-color:#dbdfe6;border-bottom-color:#e3e9ef;border-radius:2px;background:#fff"></div><svg class="a" style="left:766px;top:142px" width="9" height="5" viewBox="0 0 9 5"><path d="M0 0 H9 L4.5 5 Z" fill="#000"/></svg>
<div class="t" style="left:792px;top:137px;font-size:12px;color:#000;font-family:'Liberation Sans', sans-serif;font-weight:normal;">备件类别</div>
<div class="a" style="left:846px;top:134px;width:121px;height:20px;border:1px solid #abadb3;border-top-color:#a0a0a0;border-left-color:#e2e3ea;border-right-color:#dbdfe6;border-bottom-color:#e3e9ef;border-radius:2px;background:#fff"></div><svg class="a" style="left:954px;top:142px" width="9" height="5" viewBox="0 0 9 5"><path d="M0 0 H9 L4.5 5 Z" fill="#000"/></svg>
<div class="t" style="left:988px;top:137px;font-size:12px;color:#000;font-family:'Liberation Sans', sans-serif;font-weight:normal;">规格型号</div>
<div class="a" style="left:1043px;top:134px;width:121px;height:20px;border:1px solid #abadb3;border-top-color:#a0a0a0;border-left-color:#e2e3ea;border-right-color:#dbdfe6;border-bottom-color:#e3e9ef;border-radius:2px;background:#fff"></div><svg class="a" style="left:1151px;top:142px" width="9" height="5" viewBox="0 0 9 5"><path d="M0 0 H9 L4.5 5 Z" fill="#000"/></svg>
<div class="t" style="left:246px;top:162px;font-size:12px;color:#000;font-family:'Liberation Sans', sans-serif;font-weight:normal;">图</div>
<div class="t" style="left:264px;top:162px;font-size:12px;color:#000;font-family:'Liberation Sans', sans-serif;font-weight:normal;">号</div>
<div class="a" style="left:286px;top:159px;width:121px;height:20px;border:1px solid #abadb3;border-top-color:#a0a0a0;border-left-color:#e2e3ea;border-right-color:#dbdfe6;border-bottom-color:#e3e9ef;border-radius:2px;background:#fff"></div>
<div class="t" style="left:415px;top:162px;font-size:12px;color:#000;font-family:'Liberation Sans', sans-serif;font-weight:normal;">供</div>
<div class="t" style="left:432px;top:162px;font-size:12px;color:#000;font-family:'Liberation Sans', sans-serif;font-weight:normal;">货</div>
<div class="t" style="left:450px;top:162px;font-size:12px;color:#000;font-family:'Liberation Sans', sans-serif;font-weight:normal;">商</div>
<div class="a" style="left:469px;top:159px;width:121px;height:20px;border:1px solid #abadb3;border-top-color:#a0a0a0;border-left-color:#e2e3ea;border-right-color:#dbdfe6;border-bottom-color:#e3e9ef;border-radius:2px;background:#fff"></div><svg class="a" style="left:577px;top:167px" width="9" height="5" viewBox="0 0 9 5"><path d="M0 0 H9 L4.5 5 Z" fill="#000"/></svg>
<div class="t" style="left:615px;top:162px;font-size:12px;color:#000;font-family:'Liberation Sans', sans-serif;font-weight:normal;">材</div>
<div class="t" style="left:638px;top:162px;font-size:12px;color:#000;font-family:'Liberation Sans', sans-serif;font-weight:normal;">质</div>
<div class="a" style="left:658px;top:159px;width:121px;height:20px;border:1px solid #abadb3;border-top-color:#a0a0a0;border-left-color:#e2e3ea;border-right-color:#dbdfe6;border-bottom-color:#e3e9ef;border-radius:2px;background:#fff"></div>
<div class="t" style="left:801px;top:162px;font-size:12px;color:#000;font-family:'Liberation Sans', sans-serif;font-weight:normal;">来</div>
<div class="t" style="left:824px;top:162px;font-size:12px;color:#000;font-family:'Liberation Sans', sans-serif;font-weight:normal;">源</div>
<div class="a" style="left:846px;top:159px;width:121px;height:20px;border:1px solid #abadb3;border-top-color:#a0a0a0;border-left-color:#e2e3ea;border-right-color:#dbdfe6;border-bottom-color:#e3e9ef;border-radius:2px;background:#fff"></div><svg class="a" style="left:954px;top:167px" width="9" height="5" viewBox="0 0 9 5"><path d="M0 0 H9 L4.5 5 Z" fill="#000"/></svg>
<div class="t" style="left:1000px;top:162px;font-size:12px;color:#000;font-family:'Liberation Sans', sans-serif;font-weight:normal;">库</div>
<div class="t" style="left:1023px;top:162px;font-size:12px;color:#000;font-family:'Liberation Sans', sans-serif;font-weight:normal;">位</div>
<div class="a" style="left:1043px;top:159px;width:121px;height:20px;border:1px solid #abadb3;border-top-color:#a0a0a0;border-left-color:#e2e3ea;border-right-color:#dbdfe6;border-bottom-color:#e3e9ef;border-radius:2px;background:#fff"></div><svg class="a" style="left:1151px;top:167px" width="9" height="5" viewBox="0 0 9 5"><path d="M0 0 H9 L4.5 5 Z" fill="#000"/></svg>
<div class="t" style="left:232px;top:190px;font-size:12px;color:#000;font-family:'Liberation Sans', sans-serif;font-weight:normal;">使用位置</div>
<div class="a" style="left:286px;top:187px;width:121px;height:20px;border:1px solid #abadb3;border-top-color:#a0a0a0;border-left-color:#e2e3ea;border-right-color:#dbdfe6;border-bottom-color:#e3e9ef;border-radius:2px;background:#fff"></div><svg class="a" style="left:394px;top:195px" width="9" height="5" viewBox="0 0 9 5"><path d="M0 0 H9 L4.5 5 Z" fill="#000"/></svg>
<div class="t" style="left:415px;top:190px;font-size:12px;color:#000;font-family:'Liberation Sans', sans-serif;font-weight:normal;">备注信息</div>
<div class="a" style="left:469px;top:187px;width:121px;height:20px;border:1px solid #abadb3;border-top-color:#a0a0a0;border-left-color:#e2e3ea;border-right-color:#dbdfe6;border-bottom-color:#e3e9ef;border-radius:2px;background:#fff"></div>
<div class="t" style="left:602px;top:190px;font-size:12px;color:#000;font-family:'Liberation Sans', sans-serif;font-weight:normal;">所属库房</div>
<div class="a" style="left:658px;top:187px;width:121px;height:20px;border:1px solid #abadb3;border-top-color:#a0a0a0;border-left-color:#e2e3ea;border-right-color:#dbdfe6;border-bottom-color:#e3e9ef;border-radius:2px;background:#fff"></div><svg class="a" style="left:766px;top:195px" width="9" height="5" viewBox="0 0 9 5"><path d="M0 0 H9 L4.5 5 Z" fill="#000"/></svg>
<div class="t" style="left:792px;top:190px;font-size:12px;color:#000;font-family:'Liberation Sans', sans-serif;font-weight:normal;">所属部门</div>
<div class="a" style="left:846px;top:187px;width:121px;height:20px;border:1px solid #abadb3;border-top-color:#a0a0a0;border-left-color:#e2e3ea;border-right-color:#dbdfe6;border-bottom-color:#e3e9ef;border-radius:2px;background:#fff"></div><svg class="a" style="left:954px;top:195px" width="9" height="5" viewBox="0 0 9 5"><path d="M0 0 H9 L4.5 5 Z" fill="#000"/></svg>
<div class="a" style="left:976px;top:185px;width:72px;height:21px;border:1px solid #707070;border-radius:3px;background:linear-gradient(#f2f2f2 0,#ebebeb 50%,#dddddd 51%,#cfcfcf 100%);box-shadow:inset 0 0 0 1px #fcfcfc;text-align:center;line-height:18px;font-size:12px">查询</div>
<div class="a" style="left:1054px;top:185px;width:72px;height:21px;border:1px solid #707070;border-radius:3px;background:linear-gradient(#f2f2f2 0,#ebebeb 50%,#dddddd 51%,#cfcfcf 100%);box-shadow:inset 0 0 0 1px #fcfcfc;text-align:center;line-height:18px;font-size:12px">高级查询</div>
<div class="a" style="left:1132px;top:185px;width:71px;height:21px;border:1px solid #707070;border-radius:3px;background:linear-gradient(#f2f2f2 0,#ebebeb 50%,#dddddd 51%,#cfcfcf 100%);box-shadow:inset 0 0 0 1px #fcfcfc;text-align:center;line-height:18px;font-size:12px">新建</div>
<div class="a" style="left:221px;top:226px;width:982px;height:482px;border:1px solid #000;background:#fff;overflow:hidden">
<div class="a" style="left:0;top:0;width:964px;height:19px;background:linear-gradient(#fbfbfc 0,#f9f9fa 40%,#f1f2f4 45%,#eff0f2 88%,#e2e3e6 90%,#e2e3e6 100%)"></div><div class="a" style="left:0;top:19px;width:964px;height:1px;background:#a0a0a0"></div><div class="t m" style="left:46px;top:4px;font-size:12px">编号</div><div class="a" style="left:40px;top:0;width:1px;height:19px;background:#e2e4e8"></div><div class="t m" style="left:146px;top:4px;font-size:12px">项目编号</div><div class="a" style="left:140px;top:0;width:1px;height:19px;background:#e2e4e8"></div><div class="t m" style="left:246px;top:4px;font-size:12px">项目名称</div><div class="a" style="left:240px;top:0;width:1px;height:19px;background:#e2e4e8"></div><div class="t m" style="left:346px;top:4px;font-size:12px">供货商</div><div class="a" style="left:340px;top:0;width:1px;height:19px;background:#e2e4e8"></div><div class="t m" style="left:446px;top:4px;font-size:12px">图号</div><div class="a" style="left:440px;top:0;width:1px;height:19px;background:#e2e4e8"></div><div class="t m" style="left:546px;top:4px;font-size:12px">规格型号</div><div class="a" style="left:540px;top:0;width:1px;height:19px;background:#e2e4e8"></div><div class="t m" style="left:646px;top:4px;font-size:12px">材质</div><div class="a" style="left:640px;top:0;width:1px;height:19px;background:#e2e4e8"></div><div class="t m" style="left:746px;top:4px;font-size:12px">备件属类</div><div class="a" style="left:740px;top:0;width:1px;height:19px;background:#e2e4e8"></div><div class="t m" style="left:846px;top:4px;font-size:12px">备件类别</div><div class="a" style="left:840px;top:0;width:1px;height:19px;background:#e2e4e8"></div><div class="t m" style="left:946px;top:4px;font-size:12px">单位</div><div class="a" style="left:940px;top:0;width:1px;height:19px;background:#e2e4e8"></div><div class="a" style="left:41px;top:20px;width:923px;height:22px;background:#ffffff"></div><div class="a" style="left:41px;top:42px;width:923px;height:1px;background:#a0a0a0"></div><div class="a" style="left:0;top:20px;width:40px;height:22px;background:linear-gradient(90deg,#ffffff 0,#ffffff 11px,#f5f6f8 11px,#f2f3f5 37px,#dcdcdc 38px,#dcdcdc 100%)"></div><div class="a" style="left:0;top:42px;width:40px;height:1px;background:#e8e8ea"></div><div class="t m" style="left:43px;top:25px;font-size:12px;letter-spacing:-1.2px;color:#000000;font-family:'Liberation Mono', monospace">4838</div><div class="t m" style="left:143px;top:25px;font-size:12px;letter-spacing:-1.2px;color:#000000;font-family:'Liberation Mono', monospace">YG12204010093</div><div class="t" style="left:242px;top:24px;font-size:12px;color:#000000"><span class="m" style="font-family:'Liberation Mono', monospace;font-size:12px;letter-spacing:-1.2px">0</span>型圈</div><div class="t" style="left:742px;top:24px;font-size:12px;color:#000000">标准件（国产）</div><div class="t" style="left:843px;top:24px;font-size:12px;color:#000000">日常备件</div><div class="t m" style="left:943px;top:25px;font-size:12px;letter-spacing:-1.2px;color:#000000;font-family:'Liberation Mono', monospace">M</div><div class="a" style="left:41px;top:43px;width:923px;height:22px;background:#e0ffff"></div><div class="a" style="left:41px;top:65px;width:923px;height:1px;background:#a0a0a0"></div><div class="a" style="left:0;top:43px;width:40px;height:22px;background:linear-gradient(90deg,#ffffff 0,#ffffff 11px,#f5f6f8 11px,#f2f3f5 37px,#dcdcdc 38px,#dcdcdc 100%)"></div><div class="a" style="left:0;top:65px;width:40px;height:1px;background:#e8e8ea"></div><div class="t m" style="left:43px;top:48px;font-size:12px;letter-spacing:-1.2px;color:#000000;font-family:'Liberation Mono', monospace">4837</div><div class="t m" style="left:143px;top:48px;font-size:12px;letter-spacing:-1.2px;color:#000000;font-family:'Liberation Mono', monospace">YG12204010092</div><div class="t" style="left:242px;top:47px;font-size:12px;color:#000000"><span class="m" style="font-family:'Liberation Mono', monospace;font-size:12px;letter-spacing:-1.2px">0</span>型圈</div><div class="t" style="left:742px;top:47px;font-size:12px;color:#000000">标准件（国产）</div><div class="t" style="left:843px;top:47px;font-size:12px;color:#000000">日常备件</div><div class="t m" style="left:943px;top:48px;font-size:12px;letter-spacing:-1.2px;color:#000000;font-family:'Liberation Mono', monospace">M</div><div class="a" style="left:41px;top:66px;width:923px;height:22px;background:#ffffff"></div><div class="a" style="left:41px;top:88px;width:923px;height:1px;background:#a0a0a0"></div><div class="a" style="left:0;top:66px;width:40px;height:22px;background:linear-gradient(90deg,#ffffff 0,#ffffff 11px,#f5f6f8 11px,#f2f3f5 37px,#dcdcdc 38px,#dcdcdc 100%)"></div><div class="a" style="left:0;top:88px;width:40px;height:1px;background:#e8e8ea"></div><div class="t m" style="left:43px;top:71px;font-size:12px;letter-spacing:-1.2px;color:#000000;font-family:'Liberation Mono', monospace">4836</div><div class="t m" style="left:143px;top:71px;font-size:12px;letter-spacing:-1.2px;color:#000000;font-family:'Liberation Mono', monospace">YG12204010091</div><div class="t" style="left:242px;top:70px;font-size:12px;color:#000000"><span class="m" style="font-family:'Liberation Mono', monospace;font-size:12px;letter-spacing:-1.2px">0</span>型圈</div><div class="t" style="left:742px;top:70px;font-size:12px;color:#000000">标准件（国产）</div><div class="t" style="left:843px;top:70px;font-size:12px;color:#000000">日常备件</div><div class="t m" style="left:943px;top:71px;font-size:12px;letter-spacing:-1.2px;color:#000000;font-family:'Liberation Mono', monospace">M</div><div class="a" style="left:41px;top:89px;width:923px;height:22px;background:#e0ffff"></div><div class="a" style="left:41px;top:111px;width:923px;height:1px;background:#a0a0a0"></div><div class="a" style="left:0;top:89px;width:40px;height:22px;background:linear-gradient(90deg,#ffffff 0,#ffffff 11px,#f5f6f8 11px,#f2f3f5 37px,#dcdcdc 38px,#dcdcdc 100%)"></div><div class="a" style="left:0;top:111px;width:40px;height:1px;background:#e8e8ea"></div><div class="t m" style="left:43px;top:94px;font-size:12px;letter-spacing:-1.2px;color:#000000;font-family:'Liberation Mono', monospace">4835</div><div class="t m" style="left:143px;top:94px;font-size:12px;letter-spacing:-1.2px;color:#000000;font-family:'Liberation Mono', monospace">YG12204010090</div><div class="t" style="left:242px;top:93px;font-size:12px;color:#000000"><span class="m" style="font-family:'Liberation Mono', monospace;font-size:12px;letter-spacing:-1.2px">0</span>型圈</div><div class="t" style="left:742px;top:93px;font-size:12px;color:#000000">标准件（国产）</div><div class="t" style="left:843px;top:93px;font-size:12px;color:#000000">日常备件</div><div class="t m" style="left:943px;top:94px;font-size:12px;letter-spacing:-1.2px;color:#000000;font-family:'Liberation Mono', monospace">M</div><div class="a" style="left:41px;top:112px;width:923px;height:22px;background:#ffffff"></div><div class="a" style="left:41px;top:134px;width:923px;height:1px;background:#a0a0a0"></div><div class="a" style="left:0;top:112px;width:40px;height:22px;background:linear-gradient(90deg,#ffffff 0,#ffffff 11px,#f5f6f8 11px,#f2f3f5 37px,#dcdcdc 38px,#dcdcdc 100%)"></div><div class="a" style="left:0;top:134px;width:40px;height:1px;background:#e8e8ea"></div><div class="t m" style="left:43px;top:117px;font-size:12px;letter-spacing:-1.2px;color:#000000;font-family:'Liberation Mono', monospace">4834</div><div class="t m" style="left:143px;top:117px;font-size:12px;letter-spacing:-1.2px;color:#000000;font-family:'Liberation Mono', monospace">YG12204010089</div><div class="t" style="left:242px;top:116px;font-size:12px;color:#000000"><span class="m" style="font-family:'Liberation Mono', monospace;font-size:12px;letter-spacing:-1.2px">0</span>型圈</div><div class="t" style="left:742px;top:116px;font-size:12px;color:#000000">标准件（国产）</div><div class="t" style="left:843px;top:116px;font-size:12px;color:#000000">日常备件</div><div class="t m" style="left:943px;top:117px;font-size:12px;letter-spacing:-1.2px;color:#000000;font-family:'Liberation Mono', monospace">M</div><div class="a" style="left:41px;top:135px;width:923px;height:22px;background:#3399ff"></div><div class="a" style="left:41px;top:157px;width:923px;height:1px;background:#a0a0a0"></div><div class="a" style="left:2px;top:135px;width:37px;height:23px;background:linear-gradient(90deg,#bde3f5 0,#bde3f5 8px,#8dd2f3 9px,#8dd2f3 100%);border:1px solid #5d9bb8"></div><svg class="a" style="left:7px;top:143px" width="6" height="10" viewBox="0 0 6 10"><path d="M0 0 L5 5 L0 10 Z" fill="#000"/></svg><div class="t m" style="left:43px;top:140px;font-size:12px;letter-spacing:-1.2px;color:#ffffff;font-family:'Liberation Mono', monospace">4833</div><div class="t m" style="left:143px;top:140px;font-size:12px;letter-spacing:-1.2px;color:#ffffff;font-family:'Liberation Mono', monospace">YG12204010088</div><div class="t" style="left:242px;top:139px;font-size:12px;color:#ffffff"><span class="m" style="font-family:'Liberation Mono', monospace;font-size:12px;letter-spacing:-1.2px">0</span>型圈</div><div class="t" style="left:742px;top:139px;font-size:12px;color:#ffffff">标准件（国产）</div><div class="t" style="left:843px;top:139px;font-size:12px;color:#ffffff">日常备件</div><div class="t m" style="left:943px;top:140px;font-size:12px;letter-spacing:-1.2px;color:#ffffff;font-family:'Liberation Mono', monospace">M</div><div class="a" style="left:41px;top:158px;width:923px;height:22px;background:#ffffff"></div><div class="a" style="left:41px;top:180px;width:923px;height:1px;background:#a0a0a0"></div><div class="a" style="left:0;top:158px;width:40px;height:22px;background:linear-gradient(90deg,#ffffff 0,#ffffff 11px,#f5f6f8 11px,#f2f3f5 37px,#dcdcdc 38px,#dcdcdc 100%)"></div><div class="a" style="left:0;top:180px;width:40px;height:1px;background:#e8e8ea"></div><div class="t m" style="left:43px;top:163px;font-size:12px;letter-spacing:-1.2px;color:#000000;font-family:'Liberation Mono', monospace">4832</div><div class="t m" style="left:143px;top:163px;font-size:12px;letter-spacing:-1.2px;color:#000000;font-family:'Liberation Mono', monospace">YG12204010087</div><div class="t" style="left:242px;top:162px;font-size:12px;color:#000000"><span class="m" style="font-family:'Liberation Mono', monospace;font-size:12px;letter-spacing:-1.2px">0</span>型圈</div><div class="t" style="left:742px;top:162px;font-size:12px;color:#000000">标准件（国产）</div><div class="t" style="left:843px;top:162px;font-size:12px;color:#000000">日常备件</div><div class="t m" style="left:943px;top:163px;font-size:12px;letter-spacing:-1.2px;color:#000000;font-family:'Liberation Mono', monospace">M</div><div class="a" style="left:41px;top:181px;width:923px;height:22px;background:#e0ffff"></div><div class="a" style="left:41px;top:203px;width:923px;height:1px;background:#a0a0a0"></div><div class="a" style="left:0;top:181px;width:40px;height:22px;background:linear-gradient(90deg,#ffffff 0,#ffffff 11px,#f5f6f8 11px,#f2f3f5 37px,#dcdcdc 38px,#dcdcdc 100%)"></div><div class="a" style="left:0;top:203px;width:40px;height:1px;background:#e8e8ea"></div><div class="t m" style="left:43px;top:186px;font-size:12px;letter-spacing:-1.2px;color:#000000;font-family:'Liberation Mono', monospace">4831</div><div class="t m" style="left:143px;top:186px;font-size:12px;letter-spacing:-1.2px;color:#000000;font-family:'Liberation Mono', monospace">YG12204010086</div><div class="t" style="left:242px;top:185px;font-size:12px;color:#000000"><span class="m" style="font-family:'Liberation Mono', monospace;font-size:12px;letter-spacing:-1.2px">0</span>型圈</div><div class="t" style="left:742px;top:185px;font-size:12px;color:#000000">标准件（国产）</div><div class="t" style="left:843px;top:185px;font-size:12px;color:#000000">日常备件</div><div class="t m" style="left:943px;top:186px;font-size:12px;letter-spacing:-1.2px;color:#000000;font-family:'Liberation Mono', monospace">M</div><div class="a" style="left:41px;top:204px;width:923px;height:22px;background:#ffffff"></div><div class="a" style="left:41px;top:226px;width:923px;height:1px;background:#a0a0a0"></div><div class="a" style="left:0;top:204px;width:40px;height:22px;background:linear-gradient(90deg,#ffffff 0,#ffffff 11px,#f5f6f8 11px,#f2f3f5 37px,#dcdcdc 38px,#dcdcdc 100%)"></div><div class="a" style="left:0;top:226px;width:40px;height:1px;background:#e8e8ea"></div><div class="t m" style="left:43px;top:209px;font-size:12px;letter-spacing:-1.2px;color:#000000;font-family:'Liberation Mono', monospace">4830</div><div class="t m" style="left:143px;top:209px;font-size:12px;letter-spacing:-1.2px;color:#000000;font-family:'Liberation Mono', monospace">YG12204010085</div><div class="t" style="left:242px;top:208px;font-size:12px;color:#000000"><span class="m" style="font-family:'Liberation Mono', monospace;font-size:12px;letter-spacing:-1.2px">0</span>型圈</div><div class="t" style="left:742px;top:208px;font-size:12px;color:#000000">标准件（国产）</div><div class="t" style="left:843px;top:208px;font-size:12px;color:#000000">日常备件</div><div class="t m" style="left:943px;top:209px;font-size:12px;letter-spacing:-1.2px;color:#000000;font-family:'Liberation Mono', monospace">M</div><div class="a" style="left:41px;top:227px;width:923px;height:22px;background:#e0ffff"></div><div class="a" style="left:41px;top:249px;width:923px;height:1px;background:#a0a0a0"></div><div class="a" style="left:0;top:227px;width:40px;height:22px;background:linear-gradient(90deg,#ffffff 0,#ffffff 11px,#f5f6f8 11px,#f2f3f5 37px,#dcdcdc 38px,#dcdcdc 100%)"></div><div class="a" style="left:0;top:249px;width:40px;height:1px;background:#e8e8ea"></div><div class="t m" style="left:43px;top:232px;font-size:12px;letter-spacing:-1.2px;color:#000000;font-family:'Liberation Mono', monospace">4829</div><div class="t m" style="left:143px;top:232px;font-size:12px;letter-spacing:-1.2px;color:#000000;font-family:'Liberation Mono', monospace">YG12204010084</div><div class="t" style="left:242px;top:231px;font-size:12px;color:#000000"><span class="m" style="font-family:'Liberation Mono', monospace;font-size:12px;letter-spacing:-1.2px">0</span>型圈</div><div class="t" style="left:742px;top:231px;font-size:12px;color:#000000">标准件（国产）</div><div class="t" style="left:843px;top:231px;font-size:12px;color:#000000">日常备件</div><div class="t m" style="left:943px;top:232px;font-size:12px;letter-spacing:-1.2px;color:#000000;font-family:'Liberation Mono', monospace">M</div><div class="a" style="left:41px;top:250px;width:923px;height:22px;background:#ffffff"></div><div class="a" style="left:41px;top:272px;width:923px;height:1px;background:#a0a0a0"></div><div class="a" style="left:0;top:250px;width:40px;height:22px;background:linear-gradient(90deg,#ffffff 0,#ffffff 11px,#f5f6f8 11px,#f2f3f5 37px,#dcdcdc 38px,#dcdcdc 100%)"></div><div class="a" style="left:0;top:272px;width:40px;height:1px;background:#e8e8ea"></div><div class="t m" style="left:43px;top:255px;font-size:12px;letter-spacing:-1.2px;color:#000000;font-family:'Liberation Mono', monospace">4828</div><div class="t m" style="left:143px;top:255px;font-size:12px;letter-spacing:-1.2px;color:#000000;font-family:'Liberation Mono', monospace">YG12204010083</div><div class="t" style="left:242px;top:254px;font-size:12px;color:#000000"><span class="m" style="font-family:'Liberation Mono', monospace;font-size:12px;letter-spacing:-1.2px">0</span>型圈</div><div class="t" style="left:742px;top:254px;font-size:12px;color:#000000">标准件（国产）</div><div class="t" style="left:843px;top:254px;font-size:12px;color:#000000">日常备件</div><div class="t m" style="left:943px;top:255px;font-size:12px;letter-spacing:-1.2px;color:#000000;font-family:'Liberation Mono', monospace">M</div><div class="a" style="left:41px;top:273px;width:923px;height:22px;background:#e0ffff"></div><div class="a" style="left:41px;top:295px;width:923px;height:1px;background:#a0a0a0"></div><div class="a" style="left:0;top:273px;width:40px;height:22px;background:linear-gradient(90deg,#ffffff 0,#ffffff 11px,#f5f6f8 11px,#f2f3f5 37px,#dcdcdc 38px,#dcdcdc 100%)"></div><div class="a" style="left:0;top:295px;width:40px;height:1px;background:#e8e8ea"></div><div class="t m" style="left:43px;top:278px;font-size:12px;letter-spacing:-1.2px;color:#000000;font-family:'Liberation Mono', monospace">4827</div><div class="t m" style="left:143px;top:278px;font-size:12px;letter-spacing:-1.2px;color:#000000;font-family:'Liberation Mono', monospace">YG12204010082</div><div class="t" style="left:242px;top:277px;font-size:12px;color:#000000"><span class="m" style="font-family:'Liberation Mono', monospace;font-size:12px;letter-spacing:-1.2px">0</span>型圈</div><div class="t" style="left:742px;top:277px;font-size:12px;color:#000000">标准件（国产）</div><div class="t" style="left:843px;top:277px;font-size:12px;color:#000000">日常备件</div><div class="t m" style="left:943px;top:278px;font-size:12px;letter-spacing:-1.2px;color:#000000;font-family:'Liberation Mono', monospace">M</div><div class="a" style="left:41px;top:296px;width:923px;height:22px;background:#ffffff"></div><div class="a" style="left:41px;top:318px;width:923px;height:1px;background:#a0a0a0"></div><div class="a" style="left:0;top:296px;width:40px;height:22px;background:linear-gradient(90deg,#ffffff 0,#ffffff 11px,#f5f6f8 11px,#f2f3f5 37px,#dcdcdc 38px,#dcdcdc 100%)"></div><div class="a" style="left:0;top:318px;width:40px;height:1px;background:#e8e8ea"></div><div class="t m" style="left:43px;top:301px;font-size:12px;letter-spacing:-1.2px;color:#000000;font-family:'Liberation Mono', monospace">4826</div><div class="t m" style="left:143px;top:301px;font-size:12px;letter-spacing:-1.2px;color:#000000;font-family:'Liberation Mono', monospace">1220401000599</div><div class="t" style="left:242px;top:300px;font-size:12px;color:#000000"><span class="m" style="font-family:'Liberation Mono', monospace;font-size:12px;letter-spacing:-1.2px">0</span>型圈</div><div class="t" style="left:742px;top:300px;font-size:12px;color:#000000">标准件（国产）</div><div class="t" style="left:843px;top:300px;font-size:12px;color:#000000">日常备件</div><div class="t m" style="left:943px;top:301px;font-size:12px;letter-spacing:-1.2px;color:#000000;font-family:'Liberation Mono', monospace">M</div><div class="a" style="left:41px;top:319px;width:923px;height:22px;background:#e0ffff"></div><div class="a" style="left:41px;top:341px;width:923px;height:1px;background:#a0a0a0"></div><div class="a" style="left:0;top:319px;width:40px;height:22px;background:linear-gradient(90deg,#ffffff 0,#ffffff 11px,#f5f6f8 11px,#f2f3f5 37px,#dcdcdc 38px,#dcdcdc 100%)"></div><div class="a" style="left:0;top:341px;width:40px;height:1px;background:#e8e8ea"></div><div class="t m" style="left:43px;top:324px;font-size:12px;letter-spacing:-1.2px;color:#000000;font-family:'Liberation Mono', monospace">4825</div><div class="t m" style="left:143px;top:324px;font-size:12px;letter-spacing:-1.2px;color:#000000;font-family:'Liberation Mono', monospace">YG12204010081</div><div class="t" style="left:242px;top:323px;font-size:12px;color:#000000"><span class="m" style="font-family:'Liberation Mono', monospace;font-size:12px;letter-spacing:-1.2px">0</span>型圈</div><div class="t m" style="left:543px;top:324px;font-size:12px;letter-spacing:-1.2px;color:#000000;font-family:'Liberation Mono', monospace">685*8.4</div><div class="t" style="left:742px;top:323px;font-size:12px;color:#000000">标准件（国产）</div><div class="t" style="left:843px;top:323px;font-size:12px;color:#000000">日常备件</div><div class="t m" style="left:943px;top:324px;font-size:12px;letter-spacing:-1.2px;color:#000000;font-family:'Liberation Mono', monospace">PC</div><div class="a" style="left:41px;top:342px;width:923px;height:22px;background:#ffffff"></div><div class="a" style="left:41px;top:364px;width:923px;height:1px;background:#a0a0a0"></div><div class="a" style="left:0;top:342px;width:40px;height:22px;background:linear-gradient(90deg,#ffffff 0,#ffffff 11px,#f5f6f8 11px,#f2f3f5 37px,#dcdcdc 38px,#dcdcdc 100%)"></div><div class="a" style="left:0;top:364px;width:40px;height:1px;background:#e8e8ea"></div><div class="t m" style="left:43px;top:347px;font-size:12px;letter-spacing:-1.2px;color:#000000;font-family:'Liberation Mono', monospace">4824</div><div class="t m" style="left:143px;top:347px;font-size:12px;letter-spacing:-1.2px;color:#000000;font-family:'Liberation Mono', monospace">1220401400012</div><div class="t" style="left:242px;top:346px;font-size:12px;color:#000000"><span class="m" style="font-family:'Liberation Mono', monospace;font-size:12px;letter-spacing:-1.2px">0</span>型圈</div><div class="t m" style="left:543px;top:347px;font-size:12px;letter-spacing:-1.2px;color:#000000;font-family:'Liberation Mono', monospace">660*8.4</div><div class="t" style="left:742px;top:346px;font-size:12px;color:#000000">标准件（国产）</div><div class="t" style="left:843px;top:346px;font-size:12px;color:#000000">日常备件</div><div class="t m" style="left:943px;top:347px;font-size:12px;letter-spacing:-1.2px;color:#000000;font-family:'Liberation Mono', monospace">PC</div><div class="a" style="left:41px;top:365px;width:923px;height:22px;background:#e0ffff"></div><div class="a" style="left:41px;top:387px;width:923px;height:1px;background:#a0a0a0"></div><div class="a" style="left:0;top:365px;width:40px;height:22px;background:linear-gradient(90deg,#ffffff 0,#ffffff 11px,#f5f6f8 11px,#f2f3f5 37px,#dcdcdc 38px,#dcdcdc 100%)"></div><div class="a" style="left:0;top:387px;width:40px;height:1px;background:#e8e8ea"></div><div class="t m" style="left:43px;top:370px;font-size:12px;letter-spacing:-1.2px;color:#000000;font-family:'Liberation Mono', monospace">4823</div><div class="t m" style="left:143px;top:370px;font-size:12px;letter-spacing:-1.2px;color:#000000;font-family:'Liberation Mono', monospace">YG12204010080</div><div class="t" style="left:242px;top:369px;font-size:12px;color:#000000"><span class="m" style="font-family:'Liberation Mono', monospace;font-size:12px;letter-spacing:-1.2px">0</span>型圈</div><div class="t m" style="left:543px;top:370px;font-size:12px;letter-spacing:-1.2px;color:#000000;font-family:'Liberation Mono', monospace">647*5.7</div><div class="t" style="left:742px;top:369px;font-size:12px;color:#000000">标准件（国产）</div><div class="t" style="left:843px;top:369px;font-size:12px;color:#000000">日常备件</div><div class="t m" style="left:943px;top:370px;font-size:12px;letter-spacing:-1.2px;color:#000000;font-family:'Liberation Mono', monospace">PC</div><div class="a" style="left:41px;top:388px;width:923px;height:22px;background:#ffffff"></div><div class="a" style="left:41px;top:410px;width:923px;height:1px;background:#a0a0a0"></div><div class="a" style="left:0;top:388px;width:40px;height:22px;background:linear-gradient(90deg,#ffffff 0,#ffffff 11px,#f5f6f8 11px,#f2f3f5 37px,#dcdcdc 38px,#dcdcdc 100%)"></div><div class="a" style="left:0;top:410px;width:40px;height:1px;background:#e8e8ea"></div><div class="t m" style="left:43px;top:393px;font-size:12px;letter-spacing:-1.2px;color:#000000;font-family:'Liberation Mono', monospace">4822</div><div class="t m" style="left:143px;top:393px;font-size:12px;letter-spacing:-1.2px;color:#000000;font-family:'Liberation Mono', monospace">1220401002700</div><div class="t" style="left:242px;top:392px;font-size:12px;color:#000000"><span class="m" style="font-family:'Liberation Mono', monospace;font-size:12px;letter-spacing:-1.2px">0</span>型圈</div><div class="t m" style="left:543px;top:393px;font-size:12px;letter-spacing:-1.2px;color:#000000;font-family:'Liberation Mono', monospace">585*8.4</div><div class="t" style="left:742px;top:392px;font-size:12px;color:#000000">标准件（国产）</div><div class="t" style="left:843px;top:392px;font-size:12px;color:#000000">日常备件</div><div class="t m" style="left:943px;top:393px;font-size:12px;letter-spacing:-1.2px;color:#000000;font-family:'Liberation Mono', monospace">PC</div><div class="a" style="left:41px;top:411px;width:923px;height:22px;background:#e0ffff"></div><div class="a" style="left:41px;top:433px;width:923px;height:1px;background:#a0a0a0"></div><div class="a" style="left:0;top:411px;width:40px;height:22px;background:linear-gradient(90deg,#ffffff 0,#ffffff 11px,#f5f6f8 11px,#f2f3f5 37px,#dcdcdc 38px,#dcdcdc 100%)"></div><div class="a" style="left:0;top:433px;width:40px;height:1px;background:#e8e8ea"></div><div class="t m" style="left:43px;top:416px;font-size:12px;letter-spacing:-1.2px;color:#000000;font-family:'Liberation Mono', monospace">4821</div><div class="t m" style="left:143px;top:416px;font-size:12px;letter-spacing:-1.2px;color:#000000;font-family:'Liberation Mono', monospace">YG12204010079</div><div class="t" style="left:242px;top:415px;font-size:12px;color:#000000"><span class="m" style="font-family:'Liberation Mono', monospace;font-size:12px;letter-spacing:-1.2px">0</span>型圈</div><div class="t m" style="left:543px;top:416px;font-size:12px;letter-spacing:-1.2px;color:#000000;font-family:'Liberation Mono', monospace">490*5.7</div><div class="t" style="left:742px;top:415px;font-size:12px;color:#000000">标准件（国产）</div><div class="t" style="left:843px;top:415px;font-size:12px;color:#000000">日常备件</div><div class="t m" style="left:943px;top:416px;font-size:12px;letter-spacing:-1.2px;color:#000000;font-family:'Liberation Mono', monospace">PC</div><div class="a" style="left:41px;top:434px;width:923px;height:22px;background:#ffffff"></div><div class="a" style="left:41px;top:456px;width:923px;height:1px;background:#a0a0a0"></div><div class="a" style="left:0;top:434px;width:40px;height:22px;background:linear-gradient(90deg,#ffffff 0,#ffffff 11px,#f5f6f8 11px,#f2f3f5 37px,#dcdcdc 38px,#dcdcdc 100%)"></div><div class="a" style="left:0;top:456px;width:40px;height:1px;background:#e8e8ea"></div><div class="t m" style="left:43px;top:439px;font-size:12px;letter-spacing:-1.2px;color:#000000;font-family:'Liberation Mono', monospace">4820</div><div class="t m" style="left:143px;top:439px;font-size:12px;letter-spacing:-1.2px;color:#000000;font-family:'Liberation Mono', monospace">1220401400013</div><div class="t" style="left:242px;top:438px;font-size:12px;color:#000000"><span class="m" style="font-family:'Liberation Mono', monospace;font-size:12px;letter-spacing:-1.2px">0</span>型圈</div><div class="t m" style="left:543px;top:439px;font-size:12px;letter-spacing:-1.2px;color:#000000;font-family:'Liberation Mono', monospace">470*8</div><div class="t" style="left:742px;top:438px;font-size:12px;color:#000000">标准件（国产）</div><div class="t" style="left:843px;top:438px;font-size:12px;color:#000000">日常备件</div><div class="t m" style="left:943px;top:439px;font-size:12px;letter-spacing:-1.2px;color:#000000;font-family:'Liberation Mono', monospace">PC</div><div class="a" style="left:41px;top:457px;width:923px;height:22px;background:#e0ffff"></div><div class="a" style="left:41px;top:479px;width:923px;height:1px;background:#a0a0a0"></div><div class="a" style="left:0;top:457px;width:40px;height:22px;background:linear-gradient(90deg,#ffffff 0,#ffffff 11px,#f5f6f8 11px,#f2f3f5 37px,#dcdcdc 38px,#dcdcdc 100%)"></div><div class="a" style="left:0;top:479px;width:40px;height:1px;background:#e8e8ea"></div><div class="t m" style="left:43px;top:462px;font-size:12px;letter-spacing:-1.2px;color:#000000;font-family:'Liberation Mono', monospace">4819</div><div class="t m" style="left:143px;top:462px;font-size:12px;letter-spacing:-1.2px;color:#000000;font-family:'Liberation Mono', monospace">YG12204010078</div><div class="t" style="left:242px;top:461px;font-size:12px;color:#000000"><span class="m" style="font-family:'Liberation Mono', monospace;font-size:12px;letter-spacing:-1.2px">0</span>型圈</div><div class="t" style="left:742px;top:461px;font-size:12px;color:#000000">标准件（国产）</div><div class="t" style="left:843px;top:461px;font-size:12px;color:#000000">日常备件</div><div class="t m" style="left:943px;top:462px;font-size:12px;letter-spacing:-1.2px;color:#000000;font-family:'Liberation Mono', monospace">PC</div><div class="a" style="left:40px;top:20px;width:1px;height:443px;background:#a0a0a0"></div><div class="a" style="left:140px;top:20px;width:1px;height:443px;background:#a0a0a0"></div><div class="a" style="left:240px;top:20px;width:1px;height:443px;background:#a0a0a0"></div><div class="a" style="left:340px;top:20px;width:1px;height:443px;background:#a0a0a0"></div><div class="a" style="left:440px;top:20px;width:1px;height:443px;background:#a0a0a0"></div><div class="a" style="left:540px;top:20px;width:1px;height:443px;background:#a0a0a0"></div><div class="a" style="left:640px;top:20px;width:1px;height:443px;background:#a0a0a0"></div><div class="a" style="left:740px;top:20px;width:1px;height:443px;background:#a0a0a0"></div><div class="a" style="left:840px;top:20px;width:1px;height:443px;background:#a0a0a0"></div><div class="a" style="left:940px;top:20px;width:1px;height:443px;background:#a0a0a0"></div><div class="a" style="left:964px;top:0;width:17px;height:463px;background:linear-gradient(90deg,#e3e3e3,#f0f0f0 30%,#f0f0f0)"></div><svg class="a" style="left:968px;top:5px" width="8" height="5" viewBox="0 0 8 5"><path d="M0.5 4.5 L4 1 L7.5 4.5 Z" fill="#5a5a5a"/></svg><div class="a" style="left:965px;top:18px;width:14px;height:162px;border:1px solid #979797;border-radius:2px;background:linear-gradient(90deg,#f0f0f0,#e6e6e6 45%,#d6d6d6 55%,#cbcbcb)"></div><svg class="a" style="left:968px;top:95px" width="8" height="7" viewBox="0 0 8 7"><path d="M0 0.5 H7 M0 3 H7 M0 5.5 H7" stroke="#555" stroke-width="1"/></svg><svg class="a" style="left:968px;top:452px" width="8" height="5" viewBox="0 0 8 5"><path d="M0.5 0.5 L4 4 L7.5 0.5 Z" fill="#5a5a5a"/></svg><div class="a" style="left:0;top:463px;width:964px;height:17px;background:linear-gradient(#e3e3e3,#f0f0f0 30%,#f0f0f0)"></div><svg class="a" style="left:6px;top:467px" width="5" height="8" viewBox="0 0 5 8"><path d="M4.5 0.5 L1 4 L4.5 7.5 Z" fill="#5a5a5a"/></svg><div class="a" style="left:18px;top:464px;width:474px;height:15px;border:1px solid #979797;border-radius:2px;background:linear-gradient(#f0f0f0,#e6e6e6 45%,#d6d6d6 55%,#cbcbcb)"></div><svg class="a" style="left:251px;top:468px" width="7" height="8" viewBox="0 0 7 8"><path d="M0.5 0 V8 M3 0 V8 M5.5 0 V8" stroke="#555" stroke-width="1"/></svg><svg class="a" style="left:953px;top:467px" width="5" height="8" viewBox="0 0 5 8"><path d="M0.5 0.5 L4 4 L0.5 7.5 Z" fill="#5a5a5a"/></svg><div class="a" style="left:964px;top:463px;width:17px;height:17px;background:#f0f0f0"></div>
</div>
<div class="t" style="left:247px;top:716px;font-size:12px;color:#000;font-family:'Liberation Sans', sans-serif;font-weight:normal;">共</div>
<div class="t" style="left:294px;top:716px;font-size:12px;color:#000;font-family:'Liberation Sans', sans-serif;font-weight:normal;">条记录，每页</div>
<div class="t" style="left:390px;top:716px;font-size:12px;color:#000;font-family:'Liberation Sans', sans-serif;font-weight:normal;">条，共</div>
<div class="t" style="left:450px;top:716px;font-size:12px;color:#000;font-family:'Liberation Sans', sans-serif;font-weight:normal;">页</div>
<div class="t m" style="left:265px;top:718px;font-size:12px;letter-spacing:-1.2px;font-family:'Liberation Mono', monospace">1631</div>
<div class="t m" style="left:372px;top:718px;font-size:12px;letter-spacing:-1.2px;font-family:'Liberation Mono', monospace">50</div>
<div class="t m" style="left:431px;top:718px;font-size:12px;letter-spacing:-1.2px;font-family:'Liberation Mono', monospace">33</div>
<div class="a" style="left:872px;top:715px;width:28px;height:18px;border:1px solid #707070;border-radius:3px;background:linear-gradient(#f2f2f2 0,#ebebeb 50%,#dddddd 51%,#cfcfcf 100%)"></div>
<svg class="a" style="left:880px;top:718px" width="12" height="12" viewBox="0 0 12 12"><path d="M2.5 2 V10.5 M10.5 2 L6 6.2 L10.5 10.5" stroke="#000" stroke-width="1.1" fill="none"/></svg>
<div class="a" style="left:904px;top:715px;width:28px;height:18px;border:1px solid #adb2b5;border-radius:3px;background:linear-gradient(#f4f4f4,#f4f4f4)"></div>
<svg class="a" style="left:912px;top:718px" width="12" height="12" viewBox="0 0 12 12"><path d="M7.5 2 L3 6.2 L7.5 10.5" stroke="#a0a0a0" stroke-width="0.9" fill="none"/></svg>
<div class="a" style="left:935px;top:714px;width:25px;height:20px;border:1px solid #dde4ec;border-radius:2px;background:#fff"></div>
<div class="t m" style="left:949px;top:718px;font-size:12px;letter-spacing:-1.2px;font-family:'Liberation Mono', monospace">1</div>
<div class="a" style="left:964px;top:715px;width:28px;height:18px;border:1px solid #707070;border-radius:3px;background:linear-gradient(#f2f2f2 0,#ebebeb 50%,#dddddd 51%,#cfcfcf 100%)"></div>
<svg class="a" style="left:972px;top:718px" width="12" height="12" viewBox="0 0 12 12"><path d="M3.5 2 L8 6.2 L3.5 10.5" stroke="#000" stroke-width="1.1" fill="none"/></svg>
<div class="a" style="left:996px;top:715px;width:28px;height:18px;border:1px solid #707070;border-radius:3px;background:linear-gradient(#f2f2f2 0,#ebebeb 50%,#dddddd 51%,#cfcfcf 100%)"></div>
<svg class="a" style="left:1004px;top:718px" width="12" height="12" viewBox="0 0 12 12"><path d="M0 2 L4.5 6.2 L0 10.5 M8.5 2 V10.5" stroke="#000" stroke-width="1.1" fill="none"/></svg>
<div class="a" style="left:1040px;top:714px;width:72px;height:20px;border:1px solid #707070;border-radius:3px;background:linear-gradient(#f2f2f2 0,#ebebeb 50%,#dddddd 51%,#cfcfcf 100%);box-shadow:inset 0 0 0 1px #fcfcfc;text-align:center;line-height:17px;font-size:12px">导出当前页</div>
<div class="a" style="left:1120px;top:714px;width:72px;height:20px;border:1px solid #707070;border-radius:3px;background:linear-gradient(#f2f2f2 0,#ebebeb 50%,#dddddd 51%,#cfcfcf 100%);box-shadow:inset 0 0 0 1px #fcfcfc;text-align:center;line-height:17px;font-size:12px">导出全部页</div>
<div class="a" style="left:208px;top:742px;width:1007px;height:22px;background:#efebeb;border-top:1px solid #fff;border-bottom:1px solid #fff"></div>
<div class="a" style="left:1210px;top:750px;width:2px;height:2px;background:#888"></div><div class="a" style="left:1206px;top:754px;width:2px;height:2px;background:#888"></div><div class="a" style="left:1210px;top:754px;width:2px;height:2px;background:#888"></div><div class="a" style="left:1202px;top:758px;width:2px;height:2px;background:#888"></div><div class="a" style="left:1206px;top:758px;width:2px;height:2px;background:#888"></div><div class="a" style="left:1210px;top:758px;width:2px;height:2px;background:#888"></div>
<div class="a" style="left:8px;top:764px;width:1208px;height:22px;background:#f0eded;border-top:1px solid #fff"></div>
<div class="t" style="left:12px;top:768px;font-size:12px;color:#000;font-family:'Liberation Sans', sans-serif;font-weight:normal;">当前日期：2013年8月2日星期五 农历癸巳[蛇]年六月廿六</div>
<div class="t" style="left:326px;top:768px;font-size:12px;color:#000;font-family:'Liberation Sans', sans-serif;font-weight:normal;">|</div>
<div class="t" style="left:337px;top:768px;font-size:12px;color:#000;font-family:'Liberation Sans', sans-serif;font-weight:normal;">当前用户：管理员(admin)</div>
<div class="t" style="left:485px;top:768px;font-size:12px;color:#000;font-family:'Liberation Sans', sans-serif;font-weight:normal;">|</div>
<div class="a" style="left:1211px;top:773px;width:2px;height:2px;background:#888"></div><div class="a" style="left:1207px;top:777px;width:2px;height:2px;background:#888"></div><div class="a" style="left:1211px;top:777px;width:2px;height:2px;background:#888"></div><div class="a" style="left:1203px;top:781px;width:2px;height:2px;background:#888"></div><div class="a" style="left:1207px;top:781px;width:2px;height:2px;background:#888"></div><div class="a" style="left:1211px;top:781px;width:2px;height:2px;background:#888"></div>
</body></html>
